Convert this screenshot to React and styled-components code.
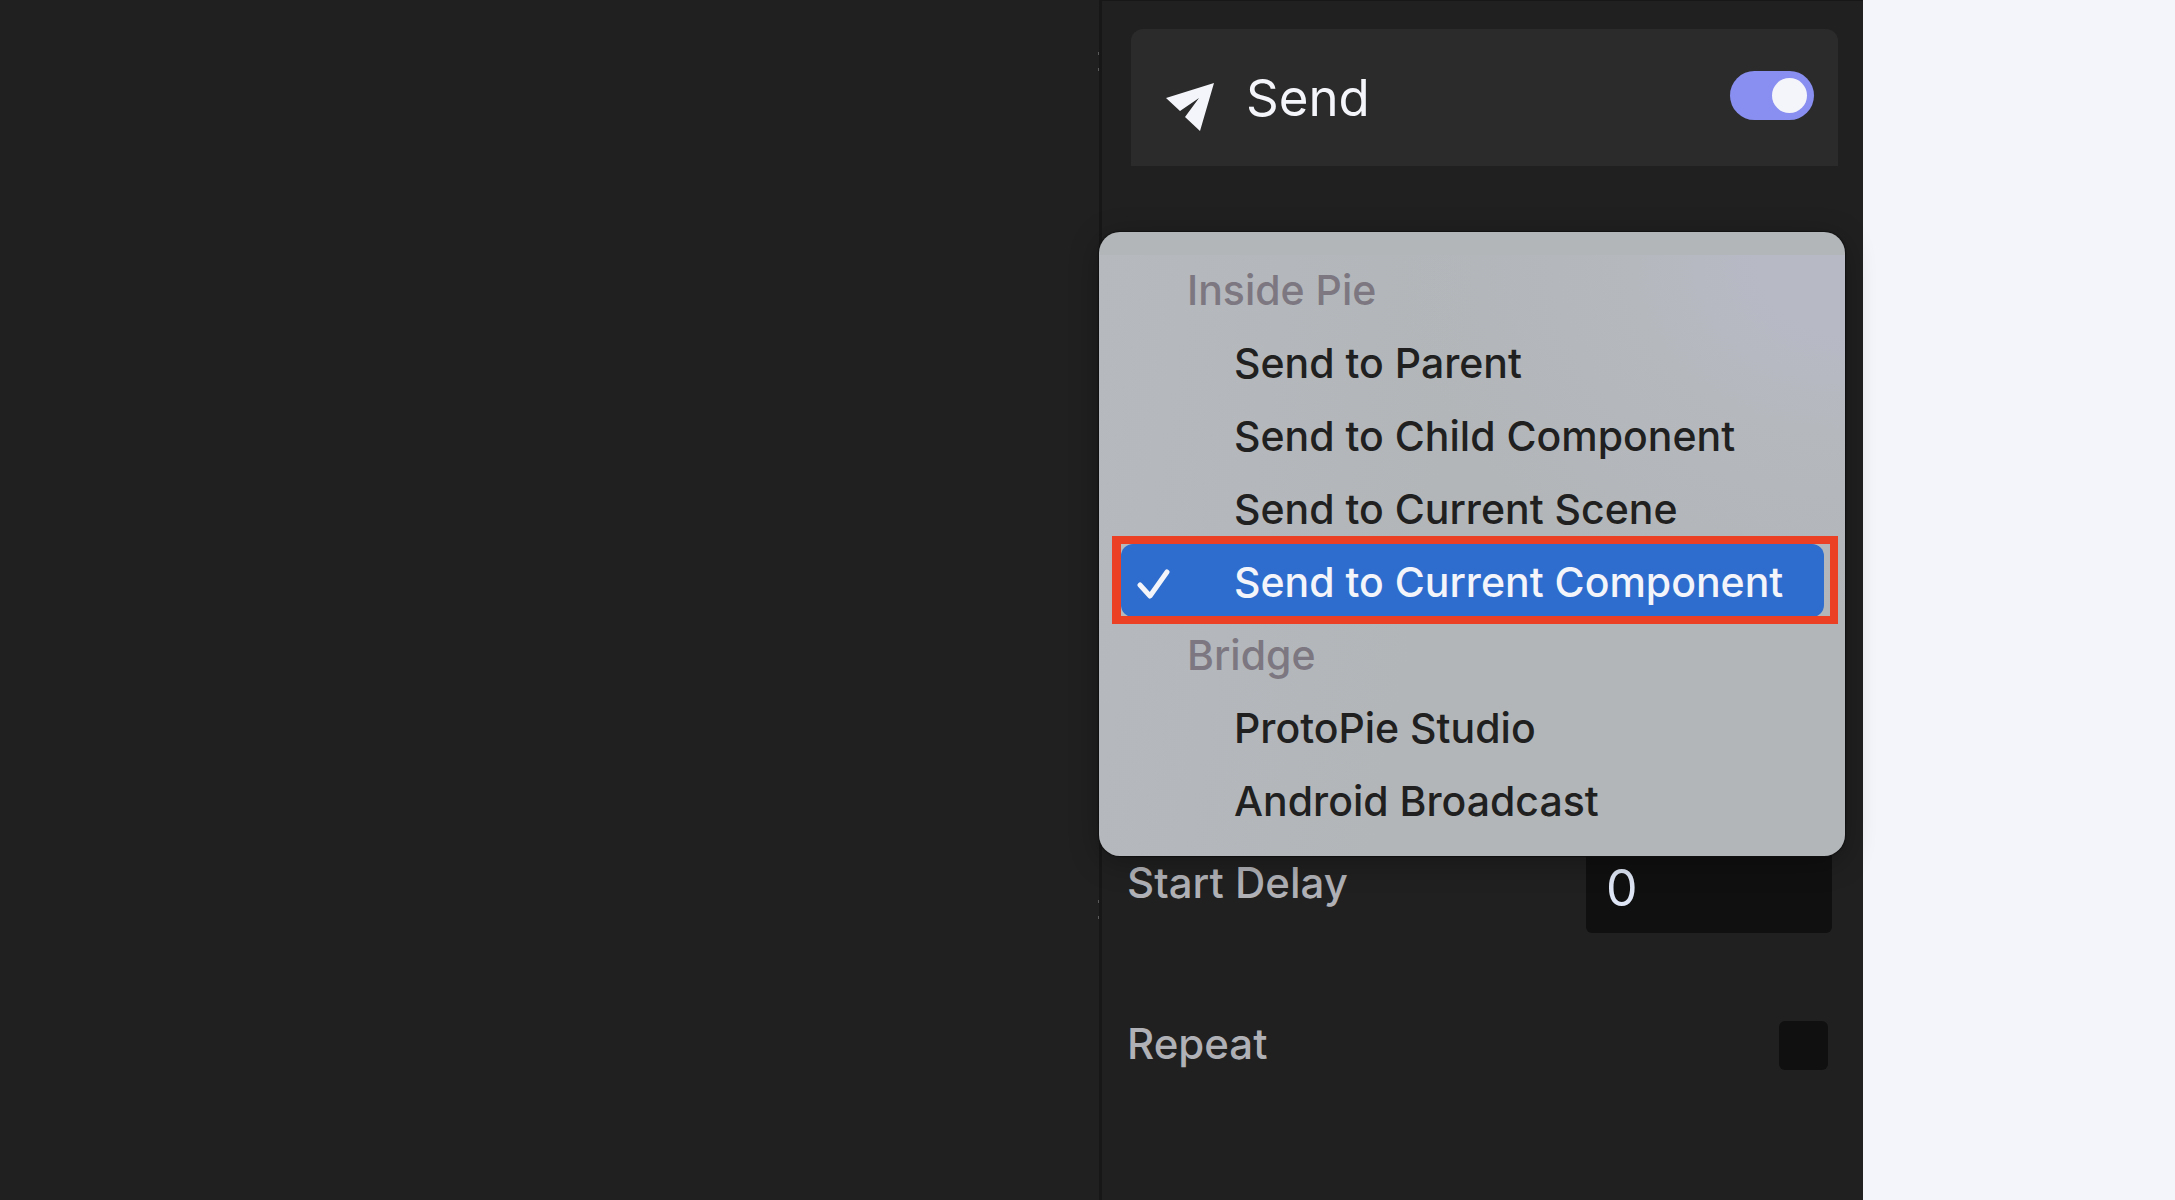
import React, { useState } from "react";
import styled, { createGlobalStyle } from "styled-components";

const menuGroups = [
  {
    title: "Inside Pie",
    items: [
      "Send to Parent",
      "Send to Child Component",
      "Send to Current Scene",
      "Send to Current Component",
    ],
  },
  { title: "Bridge", items: ["ProtoPie Studio", "Android Broadcast"] },
];

const App = () => {
  const [enabled, setEnabled] = useState(true);
  const [target, setTarget] = useState("Send to Current Component");
  const [delay, setDelay] = useState("0");
  const [repeat, setRepeat] = useState(false);

  return (
    <Page>
      <GlobalStyle />
      <Canvas>
        <Grip $top={52} />
        <Grip $top={900} />
      </Canvas>

      <Panel>
        <PanelHeader>
          <SendIcon viewBox="0 0 48 48" aria-hidden="true">
            <path d="M0 15 48 0 34 48 19 34 33 15 14 28Z" />
          </SendIcon>
          <PanelTitle>Send</PanelTitle>
          <Toggle
            type="checkbox"
            role="switch"
            aria-label="Send"
            checked={enabled}
            onChange={(e) => setEnabled(e.target.checked)}
          />
        </PanelHeader>

        {/* Target menu, open over the fields */}
        <TargetField>
          <Menu aria-label="Send target">
            {menuGroups.map((group) => (
              <React.Fragment key={group.title}>
                <MenuTitle>{group.title}</MenuTitle>
                {group.items.map((item) => (
                  <MenuItem
                    key={item}
                    type="button"
                    $active={item === target}
                    onClick={() => setTarget(item)}
                  >
                    {item === target && (
                      <CheckIcon viewBox="0 0 34 34" aria-hidden="true">
                        <path d="M3 17 13 28 30 4" />
                      </CheckIcon>
                    )}
                    {item}
                    {item === target && <Highlight />}
                  </MenuItem>
                ))}
              </React.Fragment>
            ))}
          </Menu>
        </TargetField>

        <Field>
          <FieldLabel htmlFor="delay">Start Delay</FieldLabel>
          <NumberInput
            id="delay"
            type="text"
            value={delay}
            onChange={(e) => setDelay(e.target.value)}
          />
        </Field>
        <RepeatField>
          <FieldLabel htmlFor="repeat">Repeat</FieldLabel>
          <Checkbox
            id="repeat"
            type="checkbox"
            checked={repeat}
            onChange={(e) => setRepeat(e.target.checked)}
          />
        </RepeatField>
      </Panel>

      <Margin />
    </Page>
  );
};

export default App;

const GlobalStyle = createGlobalStyle`
  * {
    box-sizing: border-box;
  }

  body {
    margin: 0;
    background: #f4f5fa;
    font-family: Inter, "Liberation Sans", sans-serif;
    font-weight: 500;
  }
`;

const Page = styled.div`
  display: grid;
  grid-template-columns: minmax(0, 1fr) 764px 312px;
  min-height: 100vh;
`;

const Canvas = styled.main`
  position: relative;
  background: #202020;
`;

// Pair of dots on the edge between canvas and panel
const Grip = styled.span`
  position: absolute;
  top: ${(props) => props.$top}px;
  right: 0;
  width: 1px;
  height: 19px;
  border: solid #5a5a5a;
  border-width: 3px 0;
`;

const Panel = styled.aside`
  display: flex;
  flex-direction: column;
  padding: 28px 25px 0 29px;
  background: #202020;
  border-left: 3px solid #171717;
  border-top: 1px solid #171717;
`;

const PanelHeader = styled.header`
  display: flex;
  align-items: center;
  height: 137px;
  padding: 0 24px 0 35px;
  background: #2b2b2b;
  border-radius: 12px 12px 0 0;
`;

const SendIcon = styled.svg`
  width: 48px;
  height: 48px;
  margin-top: 18px;
  fill: #f4f5fa;
`;

const PanelTitle = styled.h2`
  flex: 1;
  margin: 0 0 0 32px;
  color: #f4f5fa;
  font-size: 51px;
  font-weight: 400;
  line-height: 60px;
`;

const Toggle = styled.input`
  display: flex;
  align-items: center;
  appearance: none;
  width: 84px;
  height: 49px;
  margin: 0 0 4px;
  padding: 0 7px;
  background: ${(props) => (props.checked ? "#898ff0" : "#555555")};
  border-radius: 25px;
  cursor: pointer;

  &::before {
    content: "";
    width: 35px;
    height: 35px;
    margin-left: ${(props) => (props.checked ? "auto" : "0")};
    background: #f4f5fa;
    border-radius: 50%;
  }
`;

const TargetField = styled.div`
  position: relative;
  height: 679px;
`;

const Menu = styled.div`
  position: absolute;
  top: 66px;
  left: -32px;
  right: -7px;
  z-index: 1;
  display: flex;
  flex-direction: column;
  padding: 20px 21px 20px 22px;
  background:
    linear-gradient(#b2b6b9 23px, transparent 23px),
    radial-gradient(ellipse at 100% 5%, #b7bac5 0%, #b7bac5 8%, #b5b8bd 20%, #b2b6b900 42%),
    linear-gradient(100deg, #b6b9be 0%, #b2b6b9 45%);
  border-radius: 21px;
  box-shadow: 0 6px 30px rgba(0, 0, 0, 0.3), 0 0 1px 1px #141414;
`;

const MenuTitle = styled.div`
  height: 73px;
  padding-left: 66px;
  color: #7c7780;
  font-size: 41px;
  line-height: 76px;
`;

const MenuItem = styled.button`
  position: relative;
  height: 73px;
  padding: 2px 0 0 113px;
  background: ${(props) => (props.$active ? "#2e6dce" : "transparent")};
  border: none;
  border-radius: 12px;
  color: ${(props) => (props.$active ? "#f4f5fa" : "#202020")};
  font-family: inherit;
  font-size: 41px;
  font-weight: 500;
  text-align: left;
  white-space: nowrap;
  cursor: pointer;
`;

const CheckIcon = styled.svg`
  position: absolute;
  top: 24px;
  left: 16px;
  width: 34px;
  height: 34px;
  fill: none;
  stroke: #f4f5fa;
  stroke-width: 5;
  stroke-linecap: round;
  stroke-linejoin: round;
`;

// Red frame drawn around the chosen target
const Highlight = styled.span`
  position: absolute;
  inset: -8px -14px -7px -9px;
  border: 8px solid #ec4025;
  border-left-width: 9px;
  pointer-events: none;
`;

const Field = styled.div`
  display: flex;
  align-items: flex-start;
  justify-content: space-between;
  padding-right: 6px;
`;

const RepeatField = styled(Field)`
  margin-top: 88px;
  padding-right: 10px;
`;

const FieldLabel = styled.label`
  margin-left: -4px;
  padding-top: 10px;
  color: #b0b1b6;
  font-size: 42px;
  line-height: 56px;

  ${RepeatField} & {
    padding-top: 0;
    line-height: 46px;
  }
`;

const NumberInput = styled.input`
  width: 246px;
  height: 88px;
  padding: 0 20px 2px;
  background: #101010;
  border: none;
  border-radius: 6px;
  color: #dfe6f5;
  font-family: inherit;
  font-size: 50px;
`;

const Checkbox = styled.input`
  appearance: none;
  width: 49px;
  height: 49px;
  margin: 0;
  background: ${(props) => (props.checked ? "#898ff0" : "#101010")};
  border-radius: 6px;
  cursor: pointer;
`;

const Margin = styled.div`
  background: #f4f5fa;
`;
